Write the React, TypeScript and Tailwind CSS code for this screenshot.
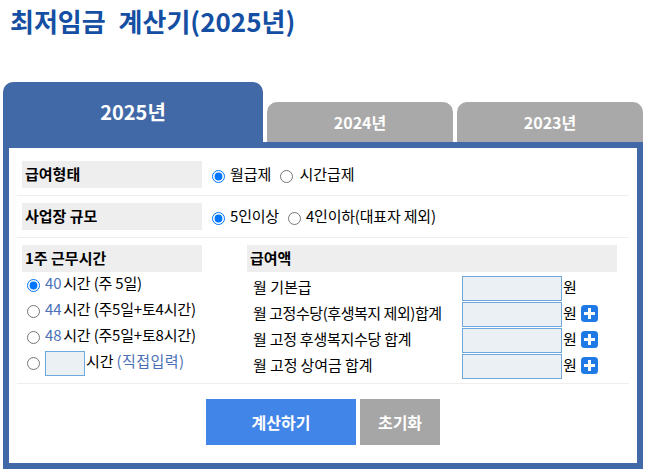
const font = "font-['Noto_Sans_CJK_KR','Noto_Sans',sans-serif]";

function Radio({ name, checked, className = '' }: { name: string; checked?: boolean; className?: string }) {
  return <input type="radio" name={name} defaultChecked={checked} className={`m-0 h-[13px] w-[13px] shrink-0 ${className}`} />;
}

function Label({ children, className = '' }: { children: React.ReactNode; className?: string }) {
  return (
    <div className={`flex h-[27px] items-center bg-[#eeeeee] pl-[3px] text-[15px] font-bold text-black ${className}`}>
      {children}
    </div>
  );
}

function AmountInput() {
  return <input type="text" className="h-[25px] w-[100px] border border-[#6ea8dc] bg-[#ebf0f5] outline-none" />;
}

function PlusIcon() {
  return (
    <svg width="17" height="17" viewBox="0 0 17 17" className="ml-[4px] mt-[3px] shrink-0">
      <rect width="17" height="17" rx="3.5" fill="#1f7ae6" />
      <path d="M3 8.5h11M8.5 3v11" stroke="#fff" strokeWidth="3" />
    </svg>
  );
}

function HourRow({ value, note, checked }: { value: string; note: string; checked?: boolean }) {
  return (
    <div className="flex h-[26px] items-center pl-[5px] text-[15px] tracking-[-0.2px] text-black">
      <Radio name="hours" checked={checked} />
      <span className="mb-[4px] ml-[5px] text-[#4a70b8]">{value}</span>
      <span className="mb-[4px] ml-[2px]">시간 ({note})</span>
    </div>
  );
}

function AmountRow({ label, plus, className = '' }: { label: string; plus?: boolean; className?: string }) {
  return (
    <div className="flex h-[26px] items-start text-[15px] leading-[22px] text-black">
      <span className={`w-[215px] whitespace-nowrap pl-[6px] ${className}`}>{label}</span>
      <AmountInput />
      <span className="ml-[1px]">원</span>
      {plus && <PlusIcon />}
    </div>
  );
}

export default function App() {
  return (
    <div className={`h-[474px] w-[654px] overflow-hidden bg-white ${font}`}>
      <h1 className="pl-[10px] pt-[3px] text-[26px] font-bold leading-[36px] text-[#144fa3] [word-spacing:7px]">최저임금 계산기(2025년)</h1>

      <div className="ml-[3px] mt-[43px] w-[640px]">
        <div className="flex h-[60px] items-end">
          <div className="flex h-[60px] w-[260px] items-center justify-center rounded-t-[10px] bg-[#4169a8] text-[20px] font-bold text-white">
            2025년
          </div>
          <div className="ml-[4px] flex h-[40px] w-[186px] items-center justify-center rounded-t-[10px] bg-[#a9a9a9] text-[16px] font-bold text-white">
            2024년
          </div>
          <div className="ml-[4px] flex h-[40px] w-[186px] items-center justify-center rounded-t-[10px] bg-[#a9a9a9] text-[16px] font-bold text-white">
            2023년
          </div>
        </div>

        <div className="h-[327px] border-[6px] border-[#4169a8] bg-white px-[8px]">
          <div className="flex h-[48px] items-start border-b border-[#eeeeee] px-[5px] pt-[13px]">
            <Label className="w-[180px]">급여형태</Label>
            <label className="ml-[10px] flex h-[27px] items-center text-[15px] text-black">
              <Radio name="payType" checked className="mt-[3px]" />
              <span className="ml-[5px]">월급제</span>
            </label>
            <label className="ml-[9px] flex h-[27px] items-center text-[15px] text-black">
              <Radio name="payType" className="mt-[3px]" />
              <span className="ml-[6px]">시간급제</span>
            </label>
          </div>

          <div className="flex h-[42px] items-start border-b border-[#eeeeee] px-[5px] pt-[7px]">
            <Label className="w-[180px]">사업장 규모</Label>
            <label className="ml-[10px] flex h-[27px] items-center text-[15px] tracking-[-0.2px] text-black">
              <Radio name="size" checked className="mt-[3px]" />
              <span className="ml-[5px]">5인이상</span>
            </label>
            <label className="ml-[9px] flex h-[27px] items-center text-[15px] tracking-[-0.2px] text-black">
              <Radio name="size" className="mt-[3px]" />
              <span className="ml-[5px]">4인이하(대표자 제외)</span>
            </label>
          </div>

          <div className="flex h-[146px] border-b border-[#eeeeee] px-[5px] pt-[7px]">
            <div className="w-[180px]">
              <Label>1주 근무시간</Label>
              <HourRow value="40" note="주 5일" checked />
              <HourRow value="44" note="주5일+토4시간" />
              <HourRow value="48" note="주5일+토8시간" />
              <div className="flex h-[26px] items-center pl-[5px] text-[15px] text-black">
                <Radio name="hours" />
                <input type="text" className="ml-[5px] h-[25px] w-[40px] border border-[#6ea8dc] bg-[#ebf0f5] outline-none" />
                <span className="mb-[4px] ml-[1px]">시간</span>
                <span className="mb-[4px] ml-[3px] tracking-[0.4px] text-[#4a70b8]">(직접입력)</span>
              </div>
            </div>
            <div className="ml-[45px] w-[370px]">
              <Label>급여액</Label>
              <div className="pt-[4px]">
                <AmountRow label="월 기본급" />
                <AmountRow label="월 고정수당(후생복지 제외)합계" plus className="tracking-[-0.45px]" />
                <AmountRow label="월 고정 후생복지수당 합계" plus className="tracking-[-0.25px]" />
                <AmountRow label="월 고정 상여금 합계" plus className="tracking-[-0.1px]" />
              </div>
            </div>
          </div>

          <div className="flex justify-center gap-[4px] pt-[15px]">
            <button className="h-[46px] w-[150px] bg-[#4285e8] text-[16px] font-bold text-white">계산하기</button>
            <button className="h-[46px] w-[80px] bg-[#a6a6a6] text-[16px] font-bold text-white">초기화</button>
          </div>
        </div>
      </div>
    </div>
  );
}
